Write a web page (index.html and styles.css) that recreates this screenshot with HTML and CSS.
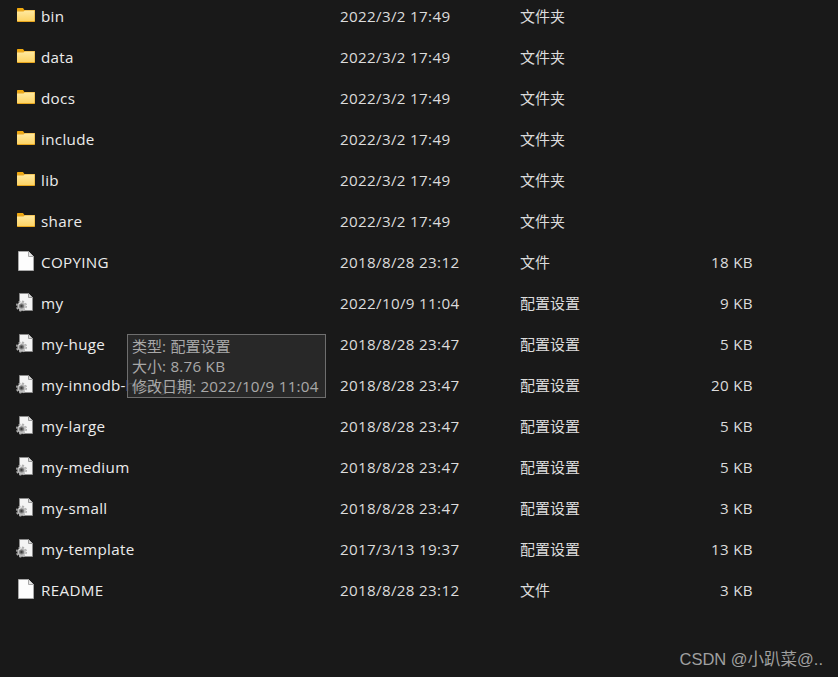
FILE: index.html
```html
<!DOCTYPE html>
<html lang="zh">
<head>
<meta charset="utf-8">
<title>Files</title>
<link rel="stylesheet" href="styles.css">
</head>
<body>
<svg class="defs" width="0" height="0" aria-hidden="true">
  <defs>
    <linearGradient id="fg" x1="0" y1="0" x2="0" y2="1">
      <stop offset="0" stop-color="#ffe9a0"/>
      <stop offset="1" stop-color="#fdd466"/>
    </linearGradient>
    <symbol id="folder" viewBox="0 0 20 16">
      <path d="M1 1.600C1 1.200 1.200 1 1.600 1H7l1.400 2H1z" fill="#f0a90f"/>
      <path d="M1 3h18c0 0 0 0 0 .3V14.200c0 .4-.2.800-.6.800H1.600C1.200 15 1 14.600 1 14.200z" fill="#e9a71f"/>
      <path d="M1 4.400h6.500l1.300-.8H18.500V14H1z" fill="url(#fg)"/>
    </symbol>
    <symbol id="doc" viewBox="0 0 18 20">
      <path d="M1.500 .5h10L16.500 5.500V19.500H1.500z" fill="#fdfdfd" stroke="#a8a8a8"/>
      <path d="M11.500 .5V5.500H16.500" fill="#e4e4e4" stroke="#a8a8a8"/>
    </symbol>
    <symbol id="conf" viewBox="0 0 20 20">
      <path d="M4.500 .5h9l4 4V17.500H4.500z" fill="#f4f4f4" stroke="#8c8c8c"/>
      <path d="M13.500 .5V4.500H17.500" fill="#d8d8d8" stroke="#9a9a9a"/>
      <circle cx="6.500" cy="13" r="4.200" fill="#bdbdbd"/>
      <circle cx="6.500" cy="13" r="4.800" fill="none" stroke="#b0b0b0" stroke-width="1.400" stroke-dasharray="2.100 1.670"/>
      <circle cx="6.500" cy="13" r="2.500" fill="#7c7c7c"/>
      <circle cx="6.500" cy="13" r="1.200" fill="#3e3e3e"/>
      <path d="M3.800 11a3.600 3.600 0 0 1 2.700-1.500" stroke="#ececec" fill="none"/>
    </symbol>
  </defs>
</svg>

<main class="list">
  <div class="row"><svg class="ico ico-folder"><use href="#folder"/></svg><span class="name">bin</span><span class="date">2022/3/2 17:49</span><span class="type">文件夹</span><span class="size"></span></div>
  <div class="row"><svg class="ico ico-folder"><use href="#folder"/></svg><span class="name">data</span><span class="date">2022/3/2 17:49</span><span class="type">文件夹</span><span class="size"></span></div>
  <div class="row"><svg class="ico ico-folder"><use href="#folder"/></svg><span class="name">docs</span><span class="date">2022/3/2 17:49</span><span class="type">文件夹</span><span class="size"></span></div>
  <div class="row"><svg class="ico ico-folder"><use href="#folder"/></svg><span class="name">include</span><span class="date">2022/3/2 17:49</span><span class="type">文件夹</span><span class="size"></span></div>
  <div class="row"><svg class="ico ico-folder"><use href="#folder"/></svg><span class="name">lib</span><span class="date">2022/3/2 17:49</span><span class="type">文件夹</span><span class="size"></span></div>
  <div class="row"><svg class="ico ico-folder"><use href="#folder"/></svg><span class="name">share</span><span class="date">2022/3/2 17:49</span><span class="type">文件夹</span><span class="size"></span></div>
  <div class="row"><svg class="ico ico-doc"><use href="#doc"/></svg><span class="name">COPYING</span><span class="date">2018/8/28 23:12</span><span class="type">文件</span><span class="size">18 KB</span></div>
  <div class="row"><svg class="ico ico-conf"><use href="#conf"/></svg><span class="name">my</span><span class="date">2022/10/9 11:04</span><span class="type">配置设置</span><span class="size">9 KB</span></div>
  <div class="row"><svg class="ico ico-conf"><use href="#conf"/></svg><span class="name">my-huge</span><span class="date">2018/8/28 23:47</span><span class="type">配置设置</span><span class="size">5 KB</span></div>
  <div class="row"><svg class="ico ico-conf"><use href="#conf"/></svg><span class="name">my-innodb-heavy-4G</span><span class="date">2018/8/28 23:47</span><span class="type">配置设置</span><span class="size">20 KB</span></div>
  <div class="row"><svg class="ico ico-conf"><use href="#conf"/></svg><span class="name">my-large</span><span class="date">2018/8/28 23:47</span><span class="type">配置设置</span><span class="size">5 KB</span></div>
  <div class="row"><svg class="ico ico-conf"><use href="#conf"/></svg><span class="name">my-medium</span><span class="date">2018/8/28 23:47</span><span class="type">配置设置</span><span class="size">5 KB</span></div>
  <div class="row"><svg class="ico ico-conf"><use href="#conf"/></svg><span class="name">my-small</span><span class="date">2018/8/28 23:47</span><span class="type">配置设置</span><span class="size">3 KB</span></div>
  <div class="row"><svg class="ico ico-conf"><use href="#conf"/></svg><span class="name">my-template</span><span class="date">2017/3/13 19:37</span><span class="type">配置设置</span><span class="size">13 KB</span></div>
  <div class="row"><svg class="ico ico-doc"><use href="#doc"/></svg><span class="name">README</span><span class="date">2018/8/28 23:12</span><span class="type">文件</span><span class="size">3 KB</span></div>
</main>

<div class="tooltip">
  <div><span class="cjk">类型</span>: <span class="cjk">配置设置</span></div>
  <div><span class="cjk">大小</span>: 8.76 KB</div>
  <div><span class="cjk">修改日期</span>: 2022/10/9 11:04</div>
</div>

<div class="mark">CSDN @小趴菜@..</div>
</body>
</html>
```
FILE: styles.css
```css
html, body {
  margin: 0;
  padding: 0;
  height: 100%;
  overflow: hidden;
}
body {
  position: relative;
  background: #191919;
  color: #e6e6e6;
  font-family: "Open Sans", "Noto Sans CJK SC", sans-serif;
  font-size: 15.2px;
  letter-spacing: 0.32px;
}
.defs {
  position: absolute;
}
.list {
  margin-top: -5px;
}
.row {
  display: grid;
  grid-template-columns: 41px 299px 180px 150px 83px;
  align-items: center;
  height: 41px;
  line-height: 20px;
  white-space: nowrap;
}
.ico {
  display: block;
}
.ico-folder {
  width: 20px;
  height: 16px;
  margin: -1px 0 0 16px;
}
.ico-doc {
  width: 18px;
  height: 20px;
  margin: -1px 0 0 17px;
}
.ico-conf {
  width: 20px;
  height: 20px;
  margin: 1px 0 0 15px;
}
.name {
  color: #ececec;
}
.date, .size {
  color: #dcdcdc;
}
.type {
  color: #dcdcdc;
  font-size: 15px;
  letter-spacing: 0;
}
.size {
  text-align: right;
}
.tooltip {
  position: absolute;
  left: 127px;
  top: 334px;
  width: 193px;
  height: 61px;
  padding: 1px 0 0 4px;
  background: rgba(43, 43, 43, 0.87);
  border: 1px solid #6e6e6e;
  color: #a8a8a8;
  letter-spacing: 0.24px;
  line-height: 20px;
  white-space: nowrap;
}
.cjk {
  font-size: 15px;
  letter-spacing: 0;
}
.mark {
  position: absolute;
  right: 15px;
  bottom: 7px;
  color: #a0a0a0;
  font-family: "Liberation Sans", "Noto Sans CJK SC", sans-serif;
  font-size: 16.500px;
  letter-spacing: 0;
  line-height: 22px;
  white-space: nowrap;
}
```
